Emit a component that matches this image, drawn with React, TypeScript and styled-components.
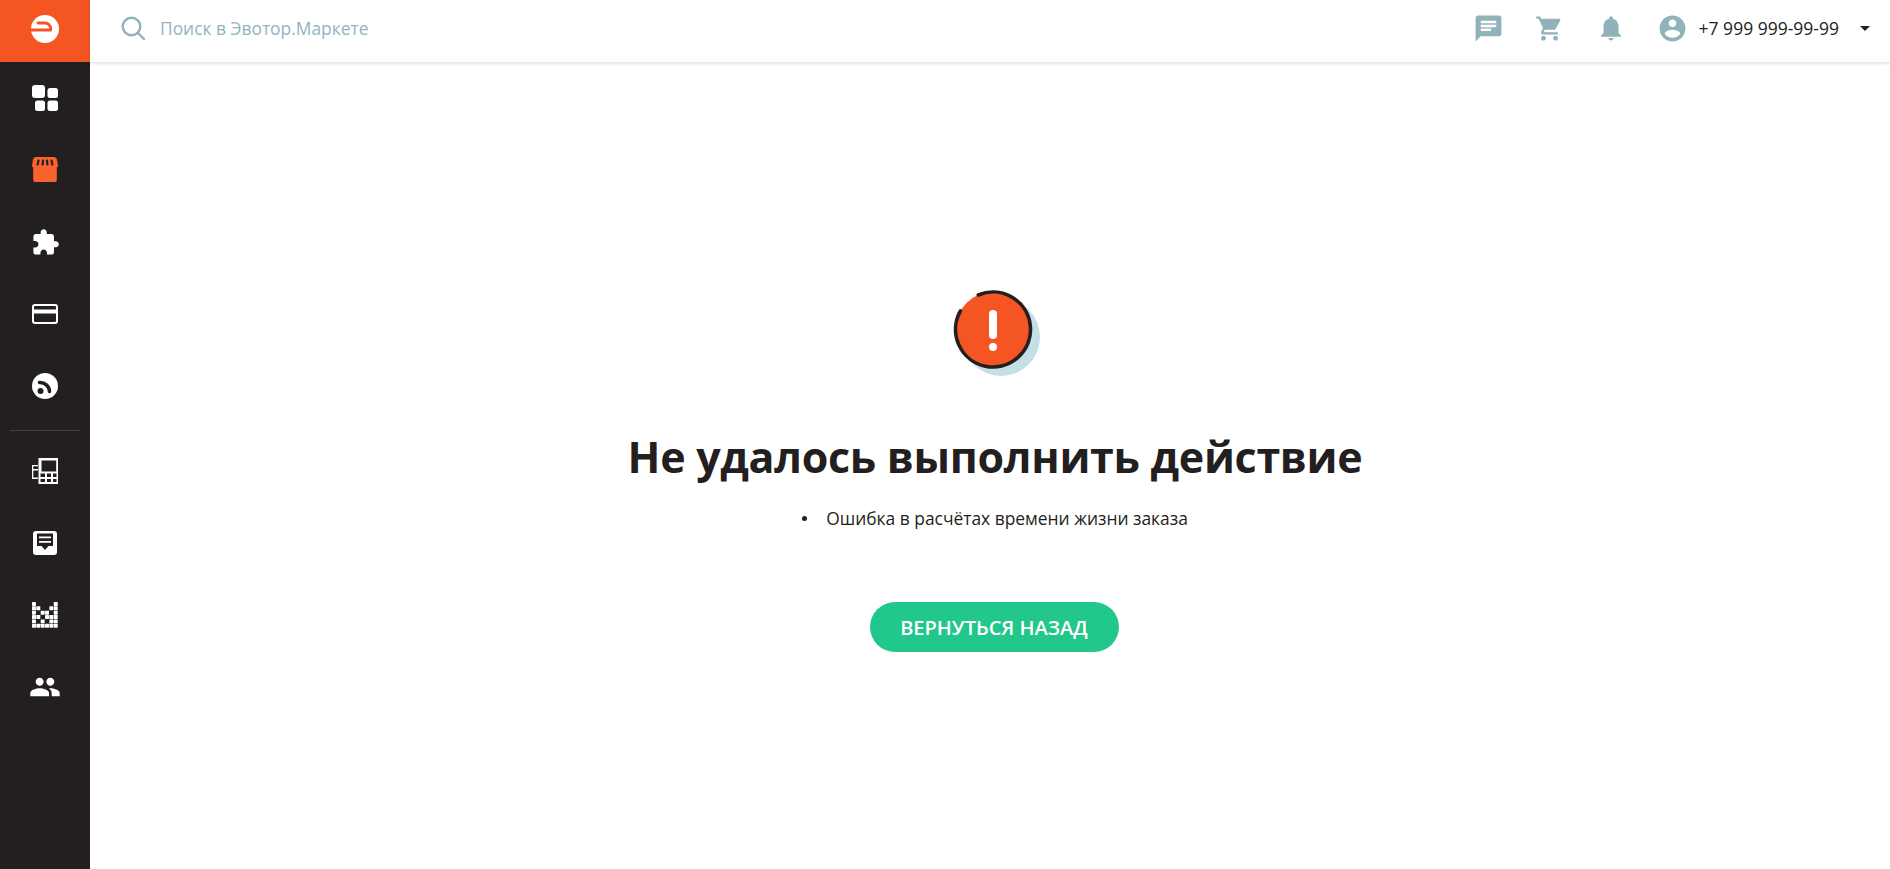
import { ReactNode } from "react";
import styled, { createGlobalStyle } from "styled-components";

const GlobalStyle = createGlobalStyle`
  html, body {
    margin: 0;
    padding: 0;
    height: 100%;
    background: #fff;
    font-family: "Open Sans", "Noto Sans", sans-serif;
    color: #231f20;
  }
`;

const Layout = styled.div`
  display: flex;
  min-height: 100vh;
`;

const Sidebar = styled.aside`
  width: 90px;
  flex-shrink: 0;
  background: #231f20;
  display: flex;
  flex-direction: column;
`;

const LogoBox = styled.div`
  height: 62px;
  box-sizing: border-box;
  padding-bottom: 4px;
  background: #f55523;
  display: flex;
  align-items: center;
  justify-content: center;
`;

const NavItem = styled.a<{ $active?: boolean }>`
  height: 72px;
  display: flex;
  align-items: center;
  justify-content: center;
  color: ${(p) => (p.$active ? "#f9622f" : "#fff")};
  cursor: pointer;
`;

const NavDivider = styled.div`
  height: 1px;
  margin: 8px 10px 4px;
  background: #454142;
`;

const Main = styled.div`
  flex: 1;
  display: flex;
  flex-direction: column;
  min-width: 0;
`;

const Header = styled.header`
  height: 62px;
  box-sizing: border-box;
  flex-shrink: 0;
  display: flex;
  align-items: center;
  justify-content: space-between;
  padding: 0 20px 6px 31px;
  background: #fff;
  box-shadow: 0 1px 4px rgba(0, 0, 0, 0.16);
`;

const Search = styled.div`
  display: flex;
  align-items: center;
  gap: 15px;
`;

const SearchText = styled.span`
  font-size: 17.4px;
  color: #91b4bf;
`;

const HeaderActions = styled.div`
  display: flex;
  align-items: center;
`;

const ActionIcon = styled.span`
  width: 61.5px;
  display: flex;
  justify-content: center;
  color: #90b2ba;
`;

const Phone = styled.span`
  font-size: 17.5px;
  margin-left: -5px;
`;

const Caret = styled.span`
  width: 0;
  height: 0;
  margin-left: 21px;
  border-left: 5px solid transparent;
  border-right: 5px solid transparent;
  border-top: 5px solid #231f20;
`;

const Content = styled.main`
  flex: 1;
  display: flex;
  flex-direction: column;
  align-items: center;
  padding: 228px 0 0 10px;
`;

const Title = styled.h1`
  margin: 51px 0 0;
  font-size: 43px;
  line-height: 60px;
  letter-spacing: -0.3px;
  font-weight: 700;
  color: #231f20;
`;

const ErrorList = styled.ul`
  list-style: none;
  margin: 19px 0 0;
  padding: 0;
`;

const ErrorItem = styled.li`
  display: flex;
  align-items: center;
  gap: 19px;
  font-size: 17.4px;
  line-height: 24px;
`;

const Bullet = styled.span`
  width: 5px;
  height: 5px;
  border-radius: 50%;
  background: #231f20;
`;

const BackButton = styled.button`
  margin: 72px 2px 0 0;
  width: 249px;
  height: 50px;
  border: none;
  border-radius: 25px;
  background: #21c78b;
  color: #fff;
  font-family: inherit;
  font-size: 20px;
  font-weight: 600;
  cursor: pointer;
`;

const Svg = ({ size = 26, box = 26, children }: { size?: number; box?: number; children: ReactNode }) => (
  <svg width={size} height={size} viewBox={`0 0 ${box} ${box}`} fill="currentColor">
    {children}
  </svg>
);

// 24x24 material glyphs
const P = ({ d, size = 30 }: { d: string; size?: number }) => (
  <Svg size={size} box={24}>
    <path d={d} />
  </Svg>
);

const Logo = () => (
  <svg width="28" height="28" viewBox="0 0 28 28">
    <circle cx="14" cy="14" r="14" fill="#fff" />
    <path d="M7 8h7a6 6 0 0 1 5.8 6" fill="none" stroke="#f55523" strokeWidth="2.8" strokeLinecap="round" />
    <path d="M-1 15h20.5" fill="none" stroke="#f55523" strokeWidth="3.2" strokeLinecap="round" />
  </svg>
);

const DashboardIcon = () => (
  <Svg>
    <rect x="0" y="0" width="13" height="13" rx="3" />
    <rect x="15.5" y="3" width="10.5" height="10" rx="2.5" />
    <rect x="3" y="15.5" width="10" height="10.5" rx="2.5" />
    <rect x="15.5" y="15.5" width="10.5" height="10.5" rx="2.5" />
  </Svg>
);

const StoreIcon = () => (
  <Svg>
    <path d="M4 0h18a3 3 0 0 1 3 2.5l1 6.5a3 3 0 0 1-1.2 1.600V23a2 2 0 0 1-2 2H3.200a2 2 0 0 1-2-2V10.600A3 3 0 0 1 0 9l1-6.500A3 3 0 0 1 4 0z" />
    <g stroke="#231f20" strokeWidth="2.2" strokeLinecap="round">
      <path d="M6.500 3.500L5.600 7.500M11 3.500L10.600 7.500M15 3.500L15.400 7.500M19.500 3.500L20.400 7.500" />
    </g>
  </Svg>
);

const CardIcon = () => (
  <Svg>
    <path d="M3 2h20a3 3 0 0 1 3 3v14a3 3 0 0 1-3 3H3a3 3 0 0 1-3-3V5a3 3 0 0 1 3-3zm-1 5.500h22V5a1 1 0 0 0-1-1H3a1 1 0 0 0-1 1zm0 4V19a1 1 0 0 0 1 1h20a1 1 0 0 0 1-1v-7.500z" fillRule="evenodd" transform="translate(0 1)" />
  </Svg>
);

const FeedIcon = () => (
  <Svg>
    <circle cx="13" cy="13" r="13" />
    <circle cx="8.500" cy="18" r="3" fill="#231f20" />
    <path d="M7.500 9.500a9.500 9.500 0 0 1 10 9" fill="none" stroke="#231f20" strokeWidth="3.6" strokeLinecap="round" />
  </Svg>
);

const TerminalIcon = () => (
  <Svg>
    <path
      fillRule="evenodd"
      d="M6.500 0H26v26H6.500zM9.500 2.500v11H24.200v-11zM8.500 15.500v3.500h4.500v-3.500zM15 15.500v3.500h4v-3.500zM21 15.500v3.500h3.500v-3.500zM8.500 21v3h4.500v-3zM15 21v3h4v-3zM21 21v3h3.500v-3z"
    />
    <path fillRule="evenodd" d="M0 7h6v14H0zM1.300 8.300v2.700H6V8.300zM1.300 12.500v7H6v-7z" />
  </Svg>
);

const ReceiptIcon = () => (
  <Svg>
    <rect x="1" y="1" width="24" height="24" rx="3" />
    <path d="M5 3.500h16v12.500h-4.500L13 20l-3.500-4H5z" fill="#231f20" />
    <path d="M7 6.500h12v1.800H7zM7 11h12v1.800H7z" />
  </Svg>
);

const checkerRows = ["100001", "110011", "101101", "110111", "101011", "111111"];

const CheckerIcon = () => (
  <Svg>
    {checkerRows.map((row, y) =>
      row.split("").map((cell, x) =>
        cell === "1" ? <rect key={`${x}-${y}`} x={x * 4.35} y={y * 4.35} width="3.95" height="3.95" rx="0.4" /> : null,
      ),
    )}
  </Svg>
);

const paths = {
  extension:
    "M20.5 11H19V7c0-1.100-.9-2-2-2h-4V3.500C13 2.120 11.880 1 10.500 1S8 2.120 8 3.500V5H4c-1.100 0-1.990.9-1.990 2v3.800H3.500c1.490 0 2.700 1.210 2.700 2.700s-1.210 2.700-2.700 2.700H2V20c0 1.100.9 2 2 2h3.800v-1.500c0-1.490 1.210-2.700 2.700-2.700 1.490 0 2.700 1.210 2.700 2.700V22H17c1.100 0 2-.9 2-2v-4h1.500c1.380 0 2.500-1.120 2.500-2.500S21.880 11 20.500 11z",
  people:
    "M16 11c1.660 0 2.990-1.340 2.990-3S17.660 5 16 5c-1.660 0-3 1.340-3 3s1.340 3 3 3zm-8 0c1.660 0 2.990-1.340 2.990-3S9.660 5 8 5C6.340 5 5 6.340 5 8s1.340 3 3 3zm0 2c-2.330 0-7 1.170-7 3.500V19h14v-2.500c0-2.330-4.670-3.500-7-3.500zm8 0c-.29 0-.62.02-.97.05 1.160.84 1.970 1.970 1.970 3.450V19h6v-2.500c0-2.330-4.670-3.500-7-3.500z",
  chat: "M20 2H4c-1.100 0-1.990.9-1.990 2L2 22l4-4h14c1.100 0 2-.9 2-2V4c0-1.100-.9-2-2-2zM6 9h12v2H6V9zm8 5H6v-2h8v2zm4-6H6V6h12v2z",
  cart: "M7 18c-1.100 0-1.990.9-1.990 2S5.900 22 7 22s2-.9 2-2-.9-2-2-2zM1 2v2h2l3.600 7.590-1.350 2.450c-.16.28-.25.61-.25.96 0 1.100.9 2 2 2h12v-2H7.420c-.14 0-.25-.11-.25-.25l.03-.12.9-1.630h7.450c.75 0 1.410-.41 1.750-1.030l3.580-6.490c.08-.14.12-.31.12-.48 0-.55-.45-1-1-1H5.210l-.94-2H1zm16 16c-1.100 0-1.990.9-1.990 2s.89 2 1.990 2 2-.9 2-2-.9-2-2-2z",
  bell: "M12 22c1.100 0 2-.9 2-2h-4c0 1.100.89 2 2 2zm6-6v-5c0-3.070-1.640-5.640-4.500-6.320V4c0-.83-.67-1.500-1.500-1.500s-1.500.67-1.500 1.500v.68C7.630 5.360 6 7.920 6 11v5l-2 2v1h16v-1l-2-2z",
  account:
    "M12 2C6.480 2 2 6.480 2 12s4.480 10 10 10 10-4.480 10-10S17.520 2 12 2zm0 3c1.660 0 3 1.340 3 3s-1.340 3-3 3-3-1.340-3-3 1.340-3 3-3zm0 14.200c-2.500 0-4.710-1.280-6-3.220.03-1.990 4-3.080 6-3.080 1.990 0 5.970 1.090 6 3.080-1.290 1.940-3.500 3.220-6 3.220z",
};

const AlertIllustration = () => (
  <svg width="90" height="86" viewBox="0 0 90 86">
    <circle cx="51" cy="47" r="39" fill="#c5dfe6" />
    <circle cx="43" cy="39.5" r="37.5" fill="#f55523" />
    <path
      d="M28.3 5A37.5 37.5 0 1 1 10.4 21"
      fill="none"
      stroke="#231f20"
      strokeWidth="3.6"
      strokeLinecap="round"
    />
    <rect x="39" y="20" width="8" height="29" rx="4" fill="#fff" />
    <circle cx="43" cy="57" r="4" fill="#fff" />
  </svg>
);

const topNav = [
  { icon: <DashboardIcon /> },
  { icon: <StoreIcon />, active: true },
  { icon: <P d={paths.extension} size={29} /> },
  { icon: <CardIcon /> },
  { icon: <FeedIcon /> },
];

const bottomNav = [
  { icon: <TerminalIcon /> },
  { icon: <ReceiptIcon /> },
  { icon: <CheckerIcon /> },
  { icon: <P d={paths.people} size={32} /> },
];

export default function App() {
  return (
    <Layout>
      <GlobalStyle />
      <Sidebar>
        <LogoBox>
          <Logo />
        </LogoBox>
        {topNav.map((item, i) => (
          <NavItem key={i} $active={item.active}>
            {item.icon}
          </NavItem>
        ))}
        <NavDivider />
        {bottomNav.map((item, i) => (
          <NavItem key={i}>{item.icon}</NavItem>
        ))}
      </Sidebar>
      <Main>
        <Header>
          <Search>
            <svg width="24" height="24" viewBox="0 0 24 24" fill="none" stroke="#90b2ba" strokeWidth="2.4">
              <circle cx="10.5" cy="10.5" r="8.8" />
              <path d="M17 17l6 6" strokeLinecap="round" />
            </svg>
            <SearchText>Поиск в Эвотор.Маркете</SearchText>
          </Search>
          <HeaderActions>
            <ActionIcon>
              <P d={paths.chat} size={31} />
            </ActionIcon>
            <ActionIcon>
              <P d={paths.cart} size={29} />
            </ActionIcon>
            <ActionIcon>
              <P d={paths.bell} size={30} />
            </ActionIcon>
            <ActionIcon>
              <P d={paths.account} size={31} />
            </ActionIcon>
            <Phone>+7 999 999-99-99</Phone>
            <Caret />
          </HeaderActions>
        </Header>
        <Content>
          <AlertIllustration />
          <Title>Не удалось выполнить действие</Title>
          <ErrorList>
            <ErrorItem>
              <Bullet />
              Ошибка в расчётах времени жизни заказа
            </ErrorItem>
          </ErrorList>
          <BackButton>ВЕРНУТЬСЯ НАЗАД</BackButton>
        </Content>
      </Main>
    </Layout>
  );
}
